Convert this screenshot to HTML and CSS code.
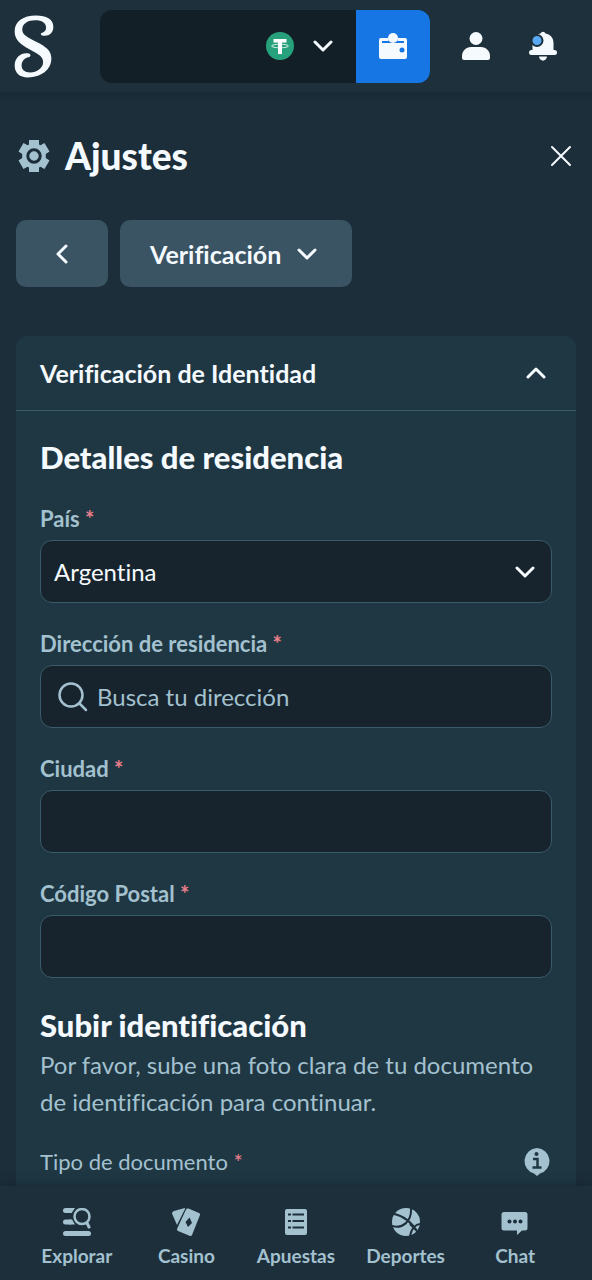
FILE: index.html
```html
<!DOCTYPE html>
<html lang="es">
<head>
<meta charset="utf-8">
<meta name="viewport" content="width=device-width, initial-scale=1">
<title>Ajustes</title>
<link rel="stylesheet" href="styles.css">
</head>
<body>
<header class="topbar">
  <a class="logo" href="#" aria-label="Inicio">
    <svg width="43" height="65" viewBox="40 40 130 195" fill="currentColor">
      <path d="M128 104C145 108 162 100 162 78C162 55 140 44 110 44C70 44 45 62 45 92C45 117 62 131 92 147C120 162 131 168 131 185C131 203 112 216 92 216C75 216 66 207 66 195C66 182 75 172 87 170C95 168 95 160 85 158C65 155 45 170 45 195C45 218 60 231 85 231C125 231 156 208 156 174C156 150 140 138 110 123C85 110 68 103 68 86C68 68 85 58 107 58C128 58 140 66 140 80C140 90 135 93 128 96C122 98 124 103 128 104Z"/>
    </svg>
  </a>
  <div class="wallet">
    <button class="balance" type="button" aria-label="Moneda">
      <svg width="28" height="28" viewBox="0 0 28 28"><circle cx="14" cy="14" r="14" fill="#26a17b"/><path fill="#fff" d="M7.500 7h13v3.500H16V22h-4V10.500H7.500z"/><ellipse cx="14" cy="14" rx="8.500" ry="1.800" fill="none" stroke="#fff" stroke-width=".8"/></svg>
      <svg class="chevron" width="20" height="12" viewBox="0 0 20 12"><path d="M2 2l8 8 8-8"/></svg>
    </button>
    <button class="deposit" type="button" aria-label="Billetera">
      <svg width="28" height="27" viewBox="0 0 28 27"><path fill="currentColor" fill-rule="evenodd" d="M2 5h7.500v3H3v2h22V8h-6.500V5H26a2 2 0 0 1 2 2v17a2 2 0 0 1-2 2H2a2 2 0 0 1-2-2V7a2 2 0 0 1 2-2zm21 9.500a2.500 2.500 0 1 0 0 5 2.500 2.500 0 0 0 0-5z"/><circle cx="14" cy="5" r="5" fill="currentColor"/></svg>
    </button>
  </div>
  <div class="account">
    <button class="icon-button" type="button" aria-label="Perfil">
      <svg width="28" height="28" viewBox="0 0 28 28" fill="currentColor"><circle cx="14" cy="6.500" r="6.500"/><path d="M9 15h10c5 0 9 4 9 9v2q0 2-2 2H2q-2 0-2-2v-2c0-5 4-9 9-9z"/></svg>
    </button>
    <button class="icon-button" type="button" aria-label="Notificaciones">
      <svg width="28" height="30" viewBox="0 0 28 30"><path fill="currentColor" d="M11.500 2.500a2.700 2.700 0 0 1 5 0C22 3.500 24.500 7.500 24.500 12v7h1a2.500 2.500 0 0 1 0 5h-23a2.500 2.500 0 0 1 0-5h1v-7c0-4.500 2.500-8.500 8-9.500zM10 25.500h8c-.5 5.500-7.500 5.500-8 0z"/><circle class="dot" cx="8" cy="9.500" r="5.500"/></svg>
    </button>
  </div>
</header>

<main class="content">
  <div class="title-row">
    <svg class="muted" width="32" height="32" viewBox="0 0 32 32"><path fill="currentColor" d="M11 0h10v4.500l1.500.8 4-2.200 5 8.500-3.700 2.300v4.200l3.700 2.300-5 8.500-4-2.200-1.500.8V32H11v-4.500l-1.500-.8-4 2.200-5-8.500 3.700-2.300v-4.200L.500 11.600l5-8.500 4 2.200 1.500-.8z"/><circle class="gear-ring" cx="16" cy="16" r="6.200"/></svg>
    <h1 class="title">Ajustes</h1>
    <button class="close" type="button" aria-label="Cerrar">
      <svg class="line" width="22" height="22" viewBox="0 0 22 22"><path d="M2 2l18 18M20 2L2 20"/></svg>
    </button>
  </div>

  <div class="section-nav">
    <button class="pill pill-back" type="button" aria-label="Volver">
      <svg class="chevron" width="12" height="20" viewBox="0 0 12 20"><path d="M10 2l-8 8 8 8"/></svg>
    </button>
    <button class="pill" type="button">Verificación
      <svg class="chevron" width="20" height="12" viewBox="0 0 20 12"><path d="M2 2l8 8 8-8"/></svg>
    </button>
  </div>

  <section class="card">
    <button class="card-header" type="button" aria-expanded="true">Verificación de Identidad
      <svg class="chevron" width="20" height="12" viewBox="0 0 20 12"><path d="M2 10l8-8 8 8"/></svg>
    </button>
    <form class="card-body">
      <h2 class="heading">Detalles de residencia</h2>
      <div class="field">
        <label class="label" for="country">País <span class="required">*</span></label>
        <div class="control">
          <select class="input" id="country"><option>Argentina</option></select>
          <svg class="chevron control-end" width="20" height="12" viewBox="0 0 20 12"><path d="M2 2l8 8 8-8"/></svg>
        </div>
      </div>
      <div class="field">
        <label class="label" for="address">Dirección de residencia <span class="required">*</span></label>
        <div class="control">
          <input class="input input-search" id="address" type="text" placeholder="Busca tu dirección">
          <svg class="line muted control-start" width="30" height="30" viewBox="0 0 30 30"><circle cx="13" cy="13" r="11.500"/><path d="M21.500 21.500l6.500 6.500"/></svg>
        </div>
      </div>
      <div class="field">
        <label class="label" for="city">Ciudad <span class="required">*</span></label>
        <input class="input" id="city" type="text">
      </div>
      <div class="field">
        <label class="label" for="postal">Código Postal <span class="required">*</span></label>
        <input class="input" id="postal" type="text">
      </div>
      <h2 class="heading heading-upload">Subir identificación</h2>
      <p class="description">Por favor, sube una foto clara de tu documento de identificación para continuar.</p>
      <div class="document-row">
        <span class="label label-light">Tipo de documento <span class="required">*</span></span>
        <button class="icon-button muted" type="button" aria-label="Información">
          <svg width="26" height="28" viewBox="0 0 26 28"><path fill="currentColor" d="M13 0a13 13 0 0 1 3 25.500L13 28l-3-2.500A13 13 0 0 1 13 0z"/><circle cx="12.500" cy="6" r="2" fill="#1f3743"/><path d="M9 11h4.500v8.500M8.500 19.500h9" fill="none" stroke="#1f3743" stroke-width="2.500"/></svg>
        </button>
      </div>
    </form>
  </section>
</main>

<nav class="bottom-nav">
  <a class="nav-item" href="#">
    <svg width="28" height="28" viewBox="0 0 28 28" fill="none" stroke="currentColor" stroke-linecap="round"><path stroke-width="5" d="M2.500 2.500H7M2.500 14H7M2.500 25.500h23"/><path fill="currentColor" stroke="none" d="M6 0h6L8.500 5H6zM6 11.500h3l3 5H6z"/><circle cx="19" cy="8.500" r="7.500" stroke-width="2.500"/><path stroke-width="3" d="M24 15l2 4"/></svg>
    Explorar
  </a>
  <a class="nav-item" href="#">
    <svg width="28" height="28" viewBox="0 0 28 28" fill="currentColor"><path d="M2 3L12 .2q1.500-.4 1 .8L5 17 .2 6Q-.5 4 2 3z"/><path fill-rule="evenodd" d="M16.500.5l10.500 4.500q1.500.8.8 2.500L20 27q-.8 1.500-2.500.8L6 23q-1.500-.8-.8-2.500L14 1.500q.8-1.500 2.500-1zM17.500 9.500l-4 4.500 2.500 5 4-4z"/></svg>
    Casino
  </a>
  <a class="nav-item" href="#">
    <svg width="28" height="28" viewBox="0 0 28 28"><rect x="3" y="1" width="22" height="26" rx="2" fill="currentColor"/><path d="M6 6.500h3M6 13h3M6 19.500h3M10.500 6.500H22M10.500 13H22M10.500 19.500H22" stroke="#1d2f3b" stroke-width="2"/></svg>
    Apuestas
  </a>
  <a class="nav-item" href="#">
    <svg width="28" height="28" viewBox="0 0 28 28"><circle cx="14" cy="14" r="14" fill="currentColor"/><path d="M1 5.500C12 8 20 14 26 25M0 18c10 3 20-4 19-18M29 16c-5 0-10 4-11 13M18 16l9 9" fill="none" stroke="#1d2f3b" stroke-width="2"/></svg>
    Deportes
  </a>
  <a class="nav-item" href="#">
    <svg width="28" height="28" viewBox="0 0 28 28"><path fill="currentColor" d="M3 4h21q2.500 0 2.500 2.500V20q0 2.500-2.500 2.500h-3L16 27v-4.500H3Q.5 22.500.5 20V6.500Q.5 4 3 4z"/><g fill="#1d2f3b"><circle cx="8.500" cy="13.500" r="2"/><circle cx="14" cy="13.500" r="2"/><circle cx="19.500" cy="13.500" r="2"/></g></svg>
    Chat
  </a>
</nav>
</body>
</html>
```
FILE: styles.css
```css
* { box-sizing: border-box; }

body {
  margin: 0;
  height: 100vh;
  display: flex;
  flex-direction: column;
  background: #1c2e39;
  color: #f5faff;
  font: 400 24px/36px Lato, "Open Sans", sans-serif;
  font-variant-ligatures: none;
}

button, input, select { font: inherit; font-variant-ligatures: none; color: inherit; }
button { border: 0; padding: 0; background: none; cursor: pointer; }
a { color: inherit; text-decoration: none; }
h1, h2, p { margin: 0; }
svg { display: block; flex: none; }

.muted { color: #a3c1cf; }
.line, .chevron { fill: none; stroke: currentColor; stroke-width: 3; stroke-linecap: round; stroke-linejoin: round; }

.topbar {
  position: relative;
  flex: none;
  display: grid;
  grid-template-columns: 84px 1fr 146px;
  align-items: center;
  height: 92px;
  padding: 0 16px;
  background: #1d303b;
  box-shadow: 0 2px 6px rgba(10, 22, 30, .25);
}
.logo { display: block; margin-left: -3px; }
.wallet {
  display: flex;
  height: 73px;
  border-radius: 12px;
  overflow: hidden;
  background: #131f27;
}
.balance {
  flex: 1;
  display: flex;
  align-items: center;
  justify-content: flex-end;
  gap: 19px;
  padding-right: 23px;
}
.deposit {
  display: grid;
  place-items: center;
  width: 74px;
  background: #1676e3;
}
.account { display: flex; justify-content: flex-end; gap: 39px; padding-right: 19px; }
.dot { fill: #59a9f5; stroke: #1d303b; stroke-width: 2; }

.content {
  flex: 1;
  min-height: 0;
  display: flex;
  flex-direction: column;
  overflow-y: auto;
  scrollbar-width: none;
  padding: 40px 16px 0;
}
.title-row { flex: none; display: flex; align-items: center; gap: 15px; padding-left: 2px; height: 48px; }
.title { font-size: 37px; line-height: 48px; font-weight: 900; }
.close { margin: 0 -16px 0 auto; padding: 4px 20px 4px 4px; }
.close .line { stroke-width: 2; }
.gear-ring { fill: none; stroke: #1c2e39; stroke-width: 3; }

.section-nav { flex: none; display: flex; gap: 12px; margin: 40px 0 49px; }
.pill {
  display: flex;
  align-items: center;
  justify-content: center;
  gap: 16px;
  height: 67px;
  padding: 0 35px 0 30px;
  border-radius: 10px;
  background: #3a5463;
  font-size: 25px;
  font-weight: 700;
}
.pill-back { width: 92px; padding: 0; }

.card { flex: 1 0 auto; border-radius: 12px 12px 0 0; background: #1f3743; }
.card-header {
  display: flex;
  align-items: center;
  justify-content: space-between;
  width: 100%;
  height: 75px;
  padding: 0 30px 0 24px;
  border-bottom: 1px solid #3c5b69;
  font-size: 25px;
  font-weight: 700;
}
.card-body { padding: 25px 24px 0; }
.heading { font-size: 31px; line-height: 42px; font-weight: 900; margin-bottom: 24px; }
.heading-upload { margin: 26px 0 0; }

.field { margin-bottom: 24px; }
.label { display: block; height: 38px; color: #a3c1cf; font-size: 22px; line-height: 34px; font-weight: 700; }
.label-light { height: auto; font-weight: 400; }
.required { color: #ee7f8c; }
.control { display: grid; align-items: center; }
.control > * { grid-area: 1 / 1; }
.control-end { justify-self: end; margin-right: 17px; pointer-events: none; }
.control-start { justify-self: start; margin-left: 18px; pointer-events: none; }
.control-start.line { stroke-width: 2.5; }
.input {
  display: block;
  width: 100%;
  height: 63px;
  padding: 0 13px;
  border: 1px solid #3a5b68;
  border-radius: 12px;
  background: #18242d;
  appearance: none;
  outline: 0;
}
.input-search { padding-left: 56px; }
.input::placeholder { color: #a3c1cf; opacity: 1; }
.description { color: #a3c1cf; line-height: 37px; }
.document-row { display: flex; align-items: center; justify-content: space-between; padding: 25px 2px 0 0; }

.bottom-nav {
  position: relative;
  flex: none;
  display: grid;
  grid-template-columns: repeat(5, 1fr);
  height: 94px;
  padding: 22px 22px 0;
  background: #1d2f3b;
  box-shadow: 0 -2px 8px rgba(15, 30, 40, .5);
}
.nav-item {
  display: flex;
  flex-direction: column;
  align-items: center;
  gap: 6px;
  color: #a3c1cf;
  font-size: 19px;
  line-height: 28px;
  font-weight: 700;
}
```
